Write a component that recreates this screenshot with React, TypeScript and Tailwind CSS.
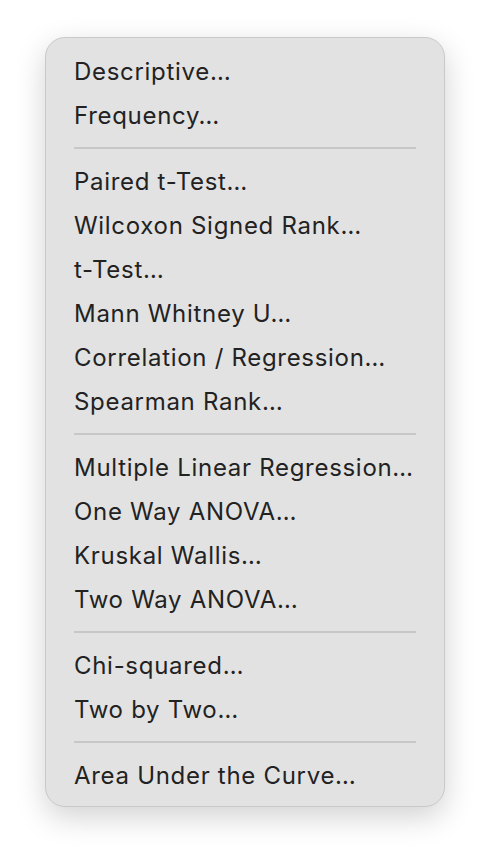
const groups: string[][] = [
  ['Descriptive…', 'Frequency…'],
  [
    'Paired t-Test…',
    'Wilcoxon Signed Rank…',
    't-Test…',
    'Mann Whitney U…',
    'Correlation / Regression…',
    'Spearman Rank…',
  ],
  ['Multiple Linear Regression…', 'One Way ANOVA…', 'Kruskal Wallis…', 'Two Way ANOVA…'],
  ['Chi-squared…', 'Two by Two…'],
  ['Area Under the Curve…'],
];

export default function App() {
  return (
    <div className="w-[490px] h-[860px] bg-white pt-[37px] pl-[45px]" style={{ fontFamily: 'Inter, "Noto Sans", sans-serif' }}>
      <div className="w-[400px] rounded-[20px] border border-[#c9c9c9] bg-[#e2e2e2] pt-[11px] pb-[9px] shadow-[0_10px_30px_rgba(0,0,0,0.18)]">
        {groups.map((items, gi) => (
          <div key={gi}>
            {gi > 0 && (
              <div className="py-[10px] px-[28px]">
                <div className="h-[2px] bg-[#c7c7c7]" />
              </div>
            )}
            {items.map((label) => (
              <div key={label} className="h-[44px] flex items-center pt-[2px] px-[28px] text-[24px] text-[#222222] tracking-[0.7px]">
                {label}
              </div>
            ))}
          </div>
        ))}
      </div>
    </div>
  );
}
